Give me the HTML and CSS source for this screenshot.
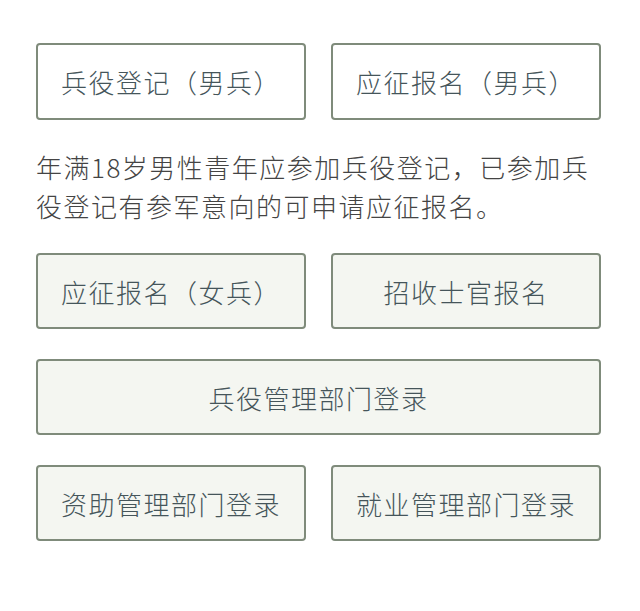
FILE: index.html
```html
<!DOCTYPE html>
<html lang="zh-CN">
<head>
  <meta charset="UTF-8" />
  <meta name="viewport" content="width=device-width, initial-scale=1.0"/>
  <title>兵役登记</title>
  <link rel="stylesheet" href="styles.css">
</head>
<body>

  <div class="container">
    <div class="btn-row">
      <a class="btn btn-light" href="#">兵役登记（男兵）</a>
      <a class="btn btn-light" href="#">应征报名（男兵）</a>
    </div>

    <p class="note">年满18岁男性青年应参加兵役登记，已参加兵役登记有参军意向的可申请应征报名。</p>

    <div class="btn-row">
      <a class="btn" href="#">应征报名（女兵）</a>
      <a class="btn" href="#">招收士官报名</a>
    </div>

    <div class="btn-row">
      <a class="btn btn-wide" href="#">兵役管理部门登录</a>
    </div>

    <div class="btn-row">
      <a class="btn" href="#">资助管理部门登录</a>
      <a class="btn" href="#">就业管理部门登录</a>
    </div>
  </div>

</body>
</html>
```

FILE: styles.css
```css
body {
  margin: 0;
  background-color: #ffffff;
  font-family: "Noto Sans CJK SC", "Noto Sans", sans-serif;
  font-weight: 300;
}

.container {
  width: 565px;
  padding: 43px 0 0 36px;
}

.btn-row {
  display: grid;
  grid-template-columns: 1fr 1fr;
  column-gap: 25px;
  margin-bottom: 30px;
}

.btn {
  display: flex;
  align-items: center;
  justify-content: center;
  height: 72px;
  border: 2px solid #7f8b7b;
  border-radius: 4px;
  background-color: #f4f6f1;
  color: #45555a;
  font-size: 26px;
  letter-spacing: 1.5px;
  text-decoration: none;
}

.btn-light {
  height: 73px;
  background-color: #ffffff;
}

.btn-wide {
  grid-column: 1 / 3;
}

.btn-row:first-child {
  margin-bottom: 0;
}

.note {
  margin: 27px 0 28px;
  font-size: 26px;
  line-height: 39px;
  color: #444444;
  letter-spacing: 1.5px;
}
```
